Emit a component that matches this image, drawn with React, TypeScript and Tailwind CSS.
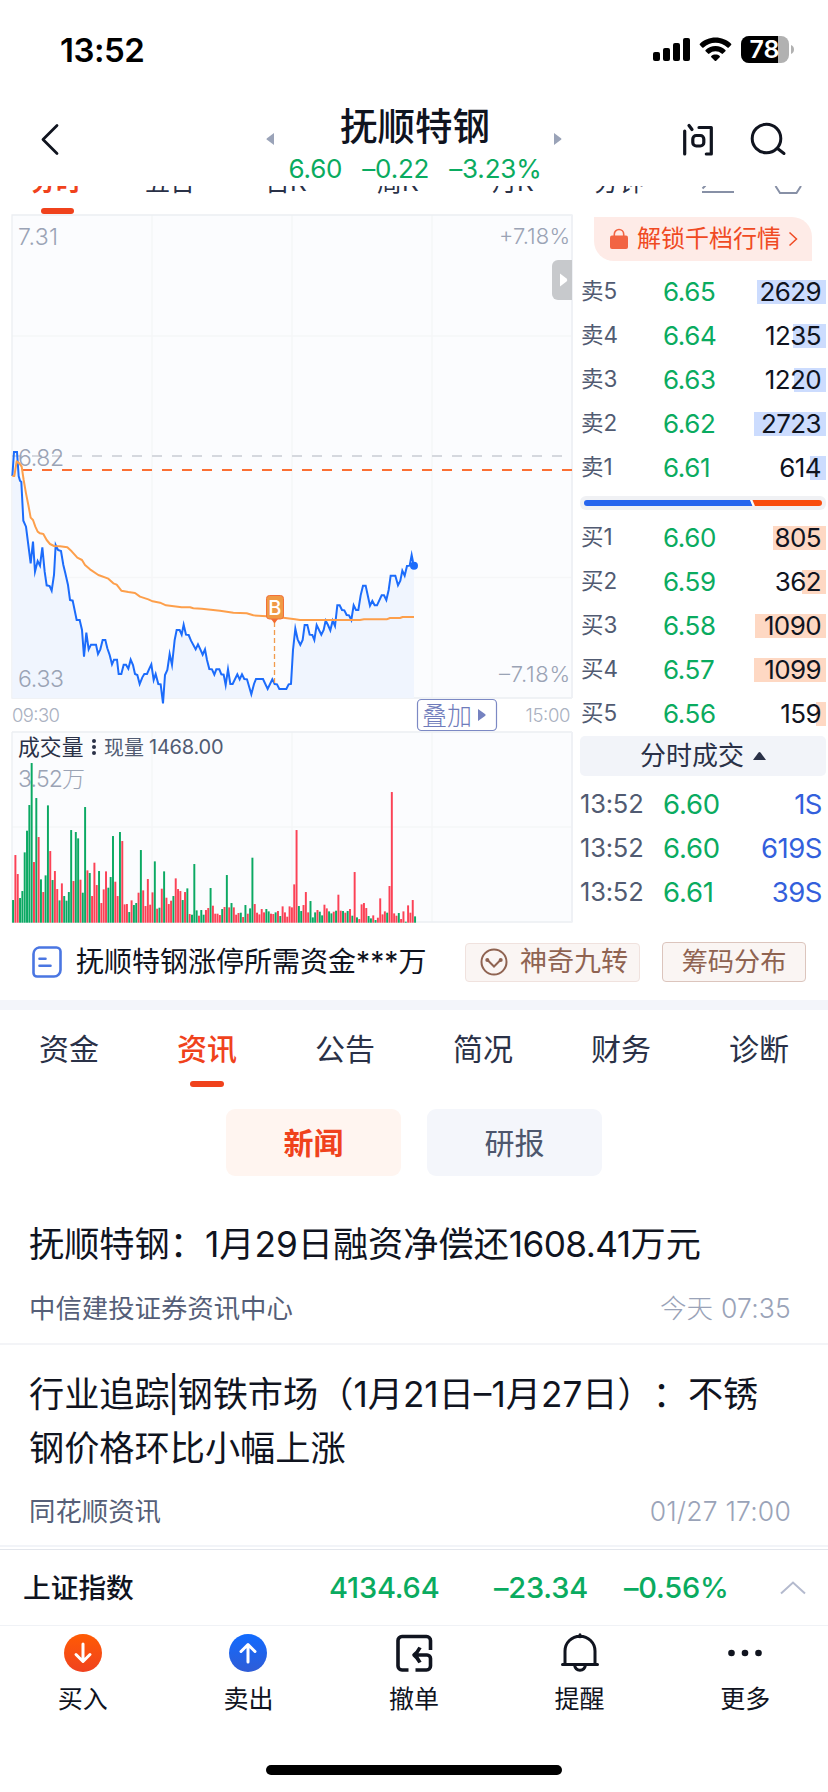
import React from "react";

const BAR_PITCH = 560 / 241;

// One token per minute: direction (g = falling, r = rising) and height in thirds of a pixel.
const VOLUME =
  "g68 r203 r146 g74 g95 g211 g276 g353 g479 r182 g374 r257 g130 r92 g142 g352 r215 g128 r155 r101 g67 r118 g80 g66 g92 g278 r125 g272 g253 r129 g90 g347 r157 g149 r80 r180 r113 g155 r59 r100 r154 g105 g137 g260 r123 r80 g272 r245 r55 r56 g32 r67 g53 g59 r90 g218 r97 r50 r131 r54 r91 g184 r42 g45 r102 g154 r75 r56 r66 g80 r133 r101 r95 g68 r92 g103 r26 g24 g176 g37 r21 g38 g24 r38 r44 g104 r51 r27 r27 r23 g41 r47 g143 r46 g59 r46 r24 r29 g30 r17 g53 r27 g43 g195 r56 r30 r25 r41 r31 g41 g34 r27 r26 g31 r35 g20 r49 r31 r18 r49 r46 r115 r278 g50 g35 r53 r92 r31 g65 g16 g31 r38 g33 g22 r54 r43 g34 g28 r33 g36 r84 r36 g35 r30 g35 r41 g21 r152 g16 r11 r55 r59 r44 g20 g13 r22 g8 r15 r73 r25 r34 g30 r110 r392 r28 r21 g29 r11 r34 g3 r52 r30 r68 g19";

const PRICE_PATH =
  "37,138 42,66 51,66 56,138 60,152 64,156 70,272 78,290 85,345 92,400 99,335 105,425 113,393 120,407 127,352 134,425 140,466 149,468 155,482 162,435 167,345 174,360 183,363 190,405 196,430 204,465 210,510 218,512 230,570 239,570 246,600 252,680 259,608 266,658 273,644 288,644 294,672 301,658 308,630 316,630 322,655 329,675 336,703 342,689 351,689 356,732 364,732 371,704 378,704 385,716 392,689 399,705 405,732 412,735 419,762 427,742 433,732 441,732 447,718 454,703 461,750 467,732 475,762 482,763 489,820 495,735 502,720 509,672 516,705 524,630 530,600 539,600 545,614 551,584 558,614 566,615 573,632 587,658 594,643 601,658 608,674 615,658 621,690 628,717 636,718 643,734 649,718 658,718 664,733 671,734 677,765 684,718 691,762 698,762 712,733 719,748 726,733 733,747 741,748 754,793 762,762 768,747 789,747 803,777 817,748 824,762 831,763 838,777 859,777 866,763 873,762 879,660 886,596 893,628 901,645 908,630 914,585 922,585 929,614 937,615 943,630 950,585 964,614 971,600 977,572 984,585 991,601 998,572 1005,588 1012,526 1019,526 1026,540 1033,541 1040,555 1047,556 1054,570 1061,526 1068,540 1075,540 1082,496 1089,467 1097,467 1103,495 1110,527 1117,513 1124,526 1131,526 1145,496 1152,496 1159,510 1166,480 1172,437 1186,437 1194,466 1201,452 1207,422 1214,437 1221,408 1229,407 1235,375 1239,395 1242,407";

const AVERAGE_PATH =
  "37,138 43,138 50,94 58,100 65,110 71,150 78,190 85,225 92,263 99,270 106,290 113,305 120,310 130,312 140,330 150,342 162,348 180,349 202,352 215,364 232,383 246,390 255,405 270,418 295,435 325,446 340,460 350,464 364,482 385,486 405,489 420,500 445,508 458,514 480,518 498,526 545,532 570,532 580,535 605,536 660,542 700,548 740,550 760,556 800,559 850,563 885,568 900,570 1080,570 1092,568 1160,568 1170,564 1200,564 1208,561 1242,561";

const SELLS = [
  { label: "卖5", price: "6.65", qty: "2629", bar: "w-[69px]" },
  { label: "卖4", price: "6.64", qty: "1235", bar: "w-[33px]" },
  { label: "卖3", price: "6.63", qty: "1220", bar: "w-[32px]" },
  { label: "卖2", price: "6.62", qty: "2723", bar: "w-[72px]" },
  { label: "卖1", price: "6.61", qty: "614", bar: "w-[16px]" },
];

const BUYS = [
  { label: "买1", price: "6.60", qty: "805", bar: "w-[53px]" },
  { label: "买2", price: "6.59", qty: "362", bar: "w-[24px]" },
  { label: "买3", price: "6.58", qty: "1090", bar: "w-[71px]" },
  { label: "买4", price: "6.57", qty: "1099", bar: "w-[72px]" },
  { label: "买5", price: "6.56", qty: "159", bar: "w-[10px]" },
];

const TRADES = [
  { time: "13:52", price: "6.60", qty: "1S" },
  { time: "13:52", price: "6.60", qty: "619S" },
  { time: "13:52", price: "6.61", qty: "39S" },
];

function StatusBar() {
  return (
    <div className="flex h-[100px] items-start justify-between pl-[60px] pr-[34px]">
      <span className="mt-[30px] text-[33px] font-semibold leading-[40px] tracking-[-0.500px] text-black">13:52</span>
      <svg className="mt-[34px]" width="141" height="32" viewBox="653 34 141 32">
        <g fill="#000">
          <rect x="653" y="52" width="7" height="9" rx="2" />
          <rect x="663" y="48" width="7" height="13" rx="2" />
          <rect x="673" y="43" width="7" height="18" rx="2" />
          <rect x="683" y="38" width="7" height="23" rx="2" />
          <path d="M715.500 37.500c6 0 11.500 2.300 15.600 6.200.4.400.4 1 0 1.400l-2.300 2.300c-.4.400-1 .4-1.400 0-3.200-3-7.400-4.700-11.900-4.700s-8.700 1.700-11.900 4.700c-.4.400-1 .4-1.400 0l-2.300-2.300c-.4-.4-.4-1 0-1.400 4.100-3.900 9.600-6.200 15.600-6.200z" />
          <path d="M715.500 46c3.700 0 7.200 1.400 9.900 3.900.4.400.4 1 0 1.400l-2.400 2.300c-.4.400-1 .4-1.400 0a9 9 0 0 0-12.200 0c-.4.400-1 .4-1.400 0l-2.400-2.300c-.4-.4-.4-1 0-1.400 2.700-2.500 6.200-3.900 9.900-3.900z" />
          <path d="M715.500 54.500c1.600 0 3 .5 4.200 1.400.4.400.4 1 0 1.400l-3.500 3.400c-.4.400-1 .4-1.400 0l-3.500-3.400c-.4-.4-.4-1 0-1.400 1.200-.9 2.600-1.400 4.200-1.400z" />
        </g>
        <clipPath id="battery">
          <rect x="741" y="36" width="48" height="27" rx="8" />
        </clipPath>
        <g clipPath="url(#battery)">
          <rect x="741" y="36" width="48" height="27" fill="#b1b1b1" />
          <rect x="741" y="36" width="37" height="27" fill="#000" />
        </g>
        <path d="M791 45c2 .6 3 2.300 3 4.500s-1 3.900-3 4.500z" fill="#b1b1b1" />
        <text x="749.500" y="58" textLength="30" lengthAdjust="spacingAndGlyphs" fontSize="24" fontWeight="600" fill="#fff">78</text>
      </svg>
    </div>
  );
}

function Header() {
  return (
    <div className="flex h-[86px] items-start">
      <svg className="mt-[20px] ml-[36px]" width="28" height="38" viewBox="36 120 28 38">
        <path d="M57 125.500 43 139.500 57 153.500" fill="none" stroke="#10141f" strokeWidth="2.800" strokeLinecap="round" strokeLinejoin="round" />
      </svg>
      <svg className="mt-[32px] ml-[202px]" width="10" height="14" viewBox="0 0 10 14">
        <path d="M8 1v12L1 7.800a1 1 0 0 1 0-1.600z" fill="#9aa3b8" />
      </svg>
      <div className="flex w-[278px] flex-col items-center">
        <div className="mt-[4px] h-[46px] text-[37.500px] font-medium leading-[46px] text-[#10141f]">抚顺特钢</div>
        <div className="mt-[6px] flex h-[26px] gap-[20px] text-[26px] leading-[26px] tracking-[-0.200px] text-[#0aab60]">
          <span>6.60</span>
          <span>–0.22</span>
          <span>–3.23%</span>
        </div>
      </div>
      <svg className="mt-[32px]" width="10" height="14" viewBox="0 0 10 14">
        <path d="M0 1v12l7-5.200a1 1 0 0 0 0-1.600z" fill="#9aa3b8" />
      </svg>
      <svg className="mt-[16px] ml-[114px]" width="116" height="46" viewBox="678 116 116 46">
        <g fill="none" stroke="#10141f" strokeWidth="3.200" strokeLinecap="round" strokeLinejoin="round">
          <path d="M684.700 131v23M689 125.500l3 4M699 127.500h12.300v26.500h-5" />
          <rect x="692.800" y="135.500" width="11" height="10.500" rx="3.500" />
          <circle cx="766.500" cy="138.500" r="14.300" strokeWidth="3" />
          <path d="m777.500 148.500 6.500 5" strokeWidth="3" />
        </g>
      </svg>
    </div>
  );
}

function PeriodTabs() {
  const cell = "absolute top-[-20px] text-[25px] leading-[32px] text-[#2a3147]";
  return (
    <div className="relative h-[28px] overflow-hidden">
      <span className="absolute left-[31px] top-[-20px] text-[25px] font-bold leading-[32px] text-[#f0421c]">分时</span>
      <span className={cell + " left-[145px]"}>五日</span>
      <span className={cell + " left-[265px]"}>日K</span>
      <span className={cell + " left-[377px]"}>周K</span>
      <span className={cell + " left-[492px]"}>月K</span>
      <span className={cell + " left-[594px]"}>分钟</span>
      <svg className="absolute left-[698px] top-0" width="110" height="12" viewBox="698 186 110 12">
        <path d="M702 192h32M702.500 188.500l3-3M775.500 186l4.500 7h16.500l4.500-7" fill="none" stroke="#8790a6" strokeWidth="2" />
      </svg>
      <div className="absolute left-[41px] top-[22px] h-[6px] w-[33px] rounded-[3px] bg-[#f0421c]" />
    </div>
  );
}

function Charts() {
  const label = "#9aa3b5";
  return (
    <svg className="block h-[716px] w-[580px] shrink-0" viewBox="0 214 580 716">
      <rect x="12" y="215" width="560" height="483" fill="#fbfcfe" />
      <rect x="12" y="732" width="560" height="190" fill="#fbfcfe" />
      <path d="M152 215v483M292 215v483M432 215v483M12 336h560M12 577.500h560M152 732v190M292 732v190M432 732v190M12 827h560" stroke="#f5f6f8" strokeWidth="1.500" fill="none" />
      <path d="M572 215H12V698H572M12 732H572M12 732V922H572" stroke="#eceef2" strokeWidth="1.300" fill="none" />
      <path d="M572 214.500V698M572 732V922.500" stroke="#eff1f5" strokeWidth="2" />

      <g transform="translate(0 430) scale(0.33333)">
        <polygon points={"37,804 " + PRICE_PATH + " 1242,804"} fill="#f0f5fe" />
      </g>
      <path d="M12 456H572" stroke="#d5d8de" strokeWidth="2" strokeDasharray="10 10" />
      <path d="M22 470H572" stroke="#fb6f33" strokeWidth="2" strokeDasharray="10 10" />

      <g fontSize="23" fontWeight="300" fill={label}>
        <text x="18" y="244.500" textLength="40">7.31</text>
        <text x="18" y="466" textLength="46">6.82</text>
        <text x="18" y="687" textLength="46">6.33</text>
        <text x="499" y="243.500" fontSize="22" textLength="71">+7.18%</text>
        <text x="499" y="681.500" fontSize="22" textLength="71">–7.18%</text>
        <text x="18" y="787" textLength="67">3.52万</text>
      </g>
      <g fontSize="18.500" fontWeight="300" fill="#aab1c1">
        <text x="12" y="721.500" textLength="48">09:30</text>
        <text x="525.500" y="721.500" textLength="45">15:00</text>
      </g>

      <g transform="translate(0 430) scale(0.33333)" fill="none" strokeLinejoin="miter">
        <polyline points={PRICE_PATH} stroke="#1c6cfb" strokeWidth="6" strokeMiterlimit="8" />
        <polyline points={AVERAGE_PATH} stroke="#fd9f4b" strokeWidth="6" strokeLinejoin="round" />
        <circle cx="1242" cy="407" r="12" fill="#1c6cfb" />
      </g>

      <path d="M274.500 622V684" stroke="#f29b4c" strokeWidth="1.300" strokeDasharray="5 3" />
      <path d="M271 619l3.500 4.500 3.500-4.500z" fill="#f26b32" />
      <rect x="266.500" y="595.500" width="17" height="23.500" rx="3" fill="#f09a45" stroke="#f2703a" />
      <text x="274.800" y="614.500" fontSize="20" fontWeight="500" fill="#fff" textAnchor="middle">B</text>

      <path d="M572 260h-14a6 6 0 0 0-6 6v28a6 6 0 0 0 6 6h14z" fill="#c7c9cc" />
      <path d="M560 273.500v13l6.500-5a2 2 0 0 0 0-3z" fill="#fff" />

      <rect x="417.500" y="699.500" width="79" height="31" rx="4" fill="#fff" stroke="#7c89c4" strokeWidth="1.200" />
      <text x="422" y="724.500" fontSize="25" fontWeight="300" fill="#6f7cbb" textLength="50">叠加</text>
      <path d="M478 709v12l7-5a1.200 1.200 0 0 0 0-2z" fill="#7582c0" />

      <text x="18" y="755" fontSize="21.800" fill="#2a3147" textLength="65.500">成交量</text>
      <g fill="#2a3147">
        <circle cx="94" cy="741" r="2" />
        <circle cx="94" cy="747" r="2" />
        <circle cx="94" cy="753" r="2" />
      </g>
      <text x="104" y="754.500" fontSize="20" fill="#515b72" textLength="40">现量</text>
      <text x="149" y="754" fontSize="20" fill="#515b72" textLength="74.500">1468.00</text>

      <g>
        {VOLUME.split(" ").map((token, i) => {
          const h = Number(token.slice(1)) / 3;
          return (
            <rect
              key={i}
              x={12.100 + i * BAR_PITCH}
              y={922.700 - h}
              width={1.950}
              height={h}
              fill={token[0] === "g" ? "#0ba963" : "#fb4256"}
            />
          );
        })}
      </g>
    </svg>
  );
}

function QuoteRow({ row, tone }: { row: { label: string; price: string; qty: string; bar: string }; tone: string }) {
  return (
    <div className="relative flex h-[44px] items-center pl-[1px] pr-[7px]">
      <div className={"absolute right-[2px] top-[10px] h-[24px] " + row.bar + " " + tone} />
      <span className="relative -top-[1px] w-[82px] text-[22.500px] leading-[44px] text-[#515b72]">{row.label}</span>
      <span className="w-[60px] text-[26px] leading-[44px] tracking-[-0.400px] text-[#0aab60]">{row.price}</span>
      <span className="relative ml-auto text-[26px] leading-[44px] tracking-[-0.600px] text-[#10141f]">{row.qty}</span>
    </div>
  );
}

function OrderBook() {
  return (
    <div className="flex w-[248px] flex-col">
      <div className="ml-[14px] mt-[3px] flex h-[44px] w-[218px] items-center rounded-bl-[20px] rounded-tr-[20px] bg-[#feebe7] pl-[16px]">
        <svg width="18" height="22" viewBox="0 0 18 22">
          <path d="M4.300 9V6.200a4.700 4.700 0 0 1 9.400 0V9" fill="none" stroke="#f26443" strokeWidth="1.600" />
          <rect y="7.500" width="18" height="13.500" rx="2" fill="#f26443" />
        </svg>
        <span className="ml-[9px] text-[24px] leading-[44px] text-[#f04a23]">解锁千档行情</span>
        <svg className="ml-[7px]" width="10" height="16" viewBox="0 0 10 16">
          <path d="m1.500 1.500 7 6.500-7 6.500" fill="none" stroke="#f04a23" strokeWidth="1.500" />
        </svg>
      </div>
      <div className="mt-[9px] flex flex-col">
        {SELLS.map((row) => (
          <QuoteRow key={row.label} row={row} tone="bg-[#ccdcfe]" />
        ))}
      </div>
      <svg className="mt-[6px] block" width="246" height="14" viewBox="0 0 246 14">
        <rect width="246" height="14" rx="6" fill="#f0f1f4" />
        <path d="M7 4H170l2.500 6H7a3 3 0 0 1 0-6z" fill="#2766ee" />
        <path d="M172.500 4H239a3 3 0 0 1 0 6h-64z" fill="#f94d0e" />
        <path d="m171 4 2.500 6" stroke="#fff" strokeWidth="1.500" />
      </svg>
      <div className="mt-[6px] flex flex-col">
        {BUYS.map((row) => (
          <QuoteRow key={row.label} row={row} tone="bg-[#fed8c3]" />
        ))}
      </div>
      <div className="flex h-[40px] w-[246px] items-center justify-center gap-[9px] rounded-[5px] bg-[#f2f4f9]">
        <span className="text-[26px] leading-[40px] text-[#2a3147]">分时成交</span>
        <svg width="13" height="8" viewBox="0 0 13 8">
          <path d="M0 8 5.500.6a1.300 1.300 0 0 1 2 0L13 8z" fill="#2a3147" />
        </svg>
      </div>
      <div className="mt-[6px] flex flex-col">
        {TRADES.map((t, i) => (
          <div key={i} className="flex h-[44px] items-center pr-[6px]">
            <span className="w-[83px] text-[25.500px] leading-[44px] tracking-[-0.200px] text-[#515b72]">{t.time}</span>
            <span className="text-[27.500px] leading-[44px] tracking-[-0.200px] text-[#0aab60]">{t.price}</span>
            <span className="ml-auto text-[27.500px] leading-[44px] tracking-[-0.500px] text-[#335fdc]">{t.qty}</span>
          </div>
        ))}
      </div>
    </div>
  );
}

function ToolRow() {
  return (
    <div className="flex h-[70px] items-center pb-[6px] pl-[32px]">
      <svg width="30" height="32" viewBox="0 0 30 32">
        <path d="M7 1.500h17.500a4 4 0 0 1 4 4V24a6.500 6.500 0 0 1-6.500 6.500H5a3.500 3.500 0 0 1-3.500-3.500V8A6.500 6.500 0 0 1 7 1.500z" fill="none" stroke="#4a76e2" strokeWidth="2.600" strokeLinejoin="round" />
        <path d="M7.500 12.800h6M7.500 19.800h11" stroke="#4a76e2" strokeWidth="2.600" strokeLinecap="round" />
      </svg>
      <span className="ml-[14px] w-[350px] whitespace-nowrap text-[28px] leading-[40px] text-[#10141f]">
        抚顺特钢涨停所需资金<span className="tracking-[0.100px]">***</span>万
      </span>
      <div className="ml-[39px] flex h-[39px] w-[175px] items-center rounded-[4px] border border-[#f0e2de] bg-[#faf5f3] pl-[14px]">
        <svg width="28" height="28" viewBox="0 0 28 28">
          <circle cx="14" cy="14" r="12.500" fill="none" stroke="#8f6351" strokeWidth="2" />
          <path d="m7.500 12 6.500 6.500L20.500 12" fill="none" stroke="#8f6351" strokeWidth="2" />
          <circle cx="7.300" cy="12" r="2" fill="#8f6351" />
          <circle cx="20.700" cy="12" r="2" fill="#8f6351" />
        </svg>
        <span className="ml-[12px] whitespace-nowrap text-[27px] leading-[36px] text-[#8f6351]">神奇九转</span>
      </div>
      <div className="ml-[22px] flex h-[40px] w-[144px] items-center justify-center rounded-[4px] border border-[#dcc5bd] bg-[#faf5f3] text-[26.200px] leading-[36px] text-[#8f6351]">
        筹码分布
      </div>
    </div>
  );
}

function SectionTabs() {
  const tabs = ["资金", "资讯", "公告", "简况", "财务", "诊断"];
  return (
    <div className="grid h-[109px] grid-cols-6 border-t-[10px] border-[#f3f5fa]">
      {tabs.map((t) =>
        t === "资讯" ? (
          <div key={t} className="flex flex-col items-center">
            <span className="mt-[19px] h-[40px] text-[30px] font-medium leading-[40px] text-[#f0421c]">{t}</span>
            <div className="mt-[12px] h-[6px] w-[34px] rounded-[3px] bg-[#f0421c]" />
          </div>
        ) : (
          <div key={t} className="flex flex-col items-center">
            <span className="mt-[19px] h-[40px] text-[30px] leading-[40px] text-[#2a3147]">{t}</span>
          </div>
        )
      )}
    </div>
  );
}

function NewsItem({ title, source, date, last }: { title: React.ReactNode; source: string; date: string; last?: boolean }) {
  return (
    <div className={"border-b-2 pl-[29px] pr-[37px] " + (last ? "h-[202px] border-[#f2f4f8] pt-[22px]" : "h-[169px] border-[#f3f4f7] pt-[41px]")}>
      <div className="whitespace-nowrap text-[35.200px] leading-[54px] text-[#10141f] [text-spacing-trim:space-all]">{title}</div>
      <div className={"flex items-center justify-between leading-[36px] " + (last ? "mt-[18px]" : "mt-[19px]")}>
        <span className="text-[26.400px] text-[#565f78]">{source}</span>
        <span className="text-[26.500px] font-light tracking-[0.200px] text-[#9aa3b8]">{date}</span>
      </div>
    </div>
  );
}

function IndexBar() {
  return (
    <div className="mt-[2px] flex h-[77px] items-center border-b border-t-[1.500px] border-b-[#f0f2f6] border-t-[#e3e6ec] pl-[23px] text-[29px] font-medium leading-[40px]">
      <span className="w-[306px] text-[27.700px] text-[#10141f]">上证指数</span>
      <span className="w-[165px] tracking-[-0.200px] text-[#0aab60]">4134.64</span>
      <span className="w-[130px] tracking-[-0.200px] text-[#0aab60]">–23.34</span>
      <span className="w-[155px] tracking-[-0.200px] text-[#0aab60]">–0.56%</span>
      <svg width="28" height="14" viewBox="0 0 28 14">
        <path d="M2 12.500 14 1.500l12 11" fill="none" stroke="#b4bace" strokeWidth="2" />
      </svg>
    </div>
  );
}

function BottomNav() {
  const item = "flex flex-col items-center gap-[9px] text-[25px] leading-[34px] text-[#10141f]";
  return (
    <div className="grid h-[139px] grid-cols-5 pt-[7px]">
      <div className={item}>
        <svg width="40" height="40" viewBox="0 0 40 40">
          <defs>
            <linearGradient id="buy" x1="0" y1="0" x2="0" y2="1">
              <stop offset="0" stopColor="#ff5b04" />
              <stop offset="1" stopColor="#f0421f" />
            </linearGradient>
          </defs>
          <circle cx="20" cy="20" r="19" fill="url(#buy)" />
          <path d="M20 11v17M13 21.500l7 7 7-7" fill="none" stroke="#fff" strokeWidth="3" strokeLinecap="round" strokeLinejoin="round" />
        </svg>
        买入
      </div>
      <div className={item}>
        <svg width="40" height="40" viewBox="0 0 40 40">
          <defs>
            <linearGradient id="sell" x1="0" y1="0" x2="0" y2="1">
              <stop offset="0" stopColor="#116bff" />
              <stop offset="1" stopColor="#2f5cd6" />
            </linearGradient>
          </defs>
          <circle cx="20" cy="20" r="19" fill="url(#sell)" />
          <path d="M20 29V12M13 18.500l7-7 7 7" fill="none" stroke="#fff" strokeWidth="3" strokeLinecap="round" strokeLinejoin="round" />
        </svg>
        卖出
      </div>
      <div className={item}>
        <svg width="40" height="40" viewBox="0 0 40 40">
          <g fill="none" stroke="#10141f" strokeWidth="3.600" strokeLinejoin="round">
            <path d="M14.500 37H8a4 4 0 0 1-4-4V7.500a4 4 0 0 1 4-4h24.500a4 4 0 0 1 4 4V17" />
            <path d="M26 14.500c-1.500 3-3.300 5.500-6 7.500 2.700 2 4.500 4.500 6 7.500M20.500 22h12.500a3.500 3.500 0 0 1 3.500 3.500V33a4 4 0 0 1-4 4H21.500" />
          </g>
        </svg>
        撤单
      </div>
      <div className={item}>
        <svg width="40" height="40" viewBox="0 0 40 40">
          <g fill="none" stroke="#10141f" strokeWidth="3" strokeLinecap="round" strokeLinejoin="round">
            <path d="M2.500 31.500h35M5 31V18a15 14.800 0 0 1 30 0v13M20 1.800v2M14.500 32c.6 3.300 2.600 5.300 5.500 5.300s4.900-2 5.500-5.300" />
          </g>
        </svg>
        提醒
      </div>
      <div className={item}>
        <svg width="40" height="40" viewBox="0 0 40 40">
          <g fill="#10141f">
            <circle cx="6.500" cy="20" r="3.300" />
            <circle cx="20" cy="20" r="3.300" />
            <circle cx="33.500" cy="20" r="3.300" />
          </g>
        </svg>
        更多
      </div>
    </div>
  );
}

export default function App() {
  return (
    <div className="flex h-[1792px] w-[828px] flex-col overflow-hidden bg-white font-['Inter','Noto_Sans_CJK_SC',sans-serif]">
      <StatusBar />
      <Header />
      <PeriodTabs />
      <div className="flex h-[716px]">
        <Charts />
        <OrderBook />
      </div>
      <ToolRow />
      <SectionTabs />
      <div className="flex h-[67px] justify-center gap-[26px] text-[30px] leading-[68px]">
        <div className="w-[175px] rounded-[9px] bg-[#fff5f0] text-center font-bold text-[#f0421c]">新闻</div>
        <div className="w-[175px] rounded-[9px] bg-[#f4f6fb] text-center text-[#4d566d]">研报</div>
      </div>
      <NewsItem
        title={
          <>
            抚顺特钢：1月29日融资净偿还<span className="tracking-[-0.600px]">1608.41</span>万元
          </>
        }
        source="中信建投证券资讯中心"
        date="今天 07:35"
      />
      <NewsItem
        title={
          <>
            行业追踪<span className="-mx-[2px]">|</span>钢铁市场（1月21日–1月27日）：不锈
            <br />
            钢价格环比小幅上涨
          </>
        }
        source="同花顺资讯"
        date="01/27 17:00"
        last
      />
      <IndexBar />
      <BottomNav />
      <div className="mx-auto h-[10px] w-[296px] shrink-0 rounded-full bg-black" />
    </div>
  );
}
